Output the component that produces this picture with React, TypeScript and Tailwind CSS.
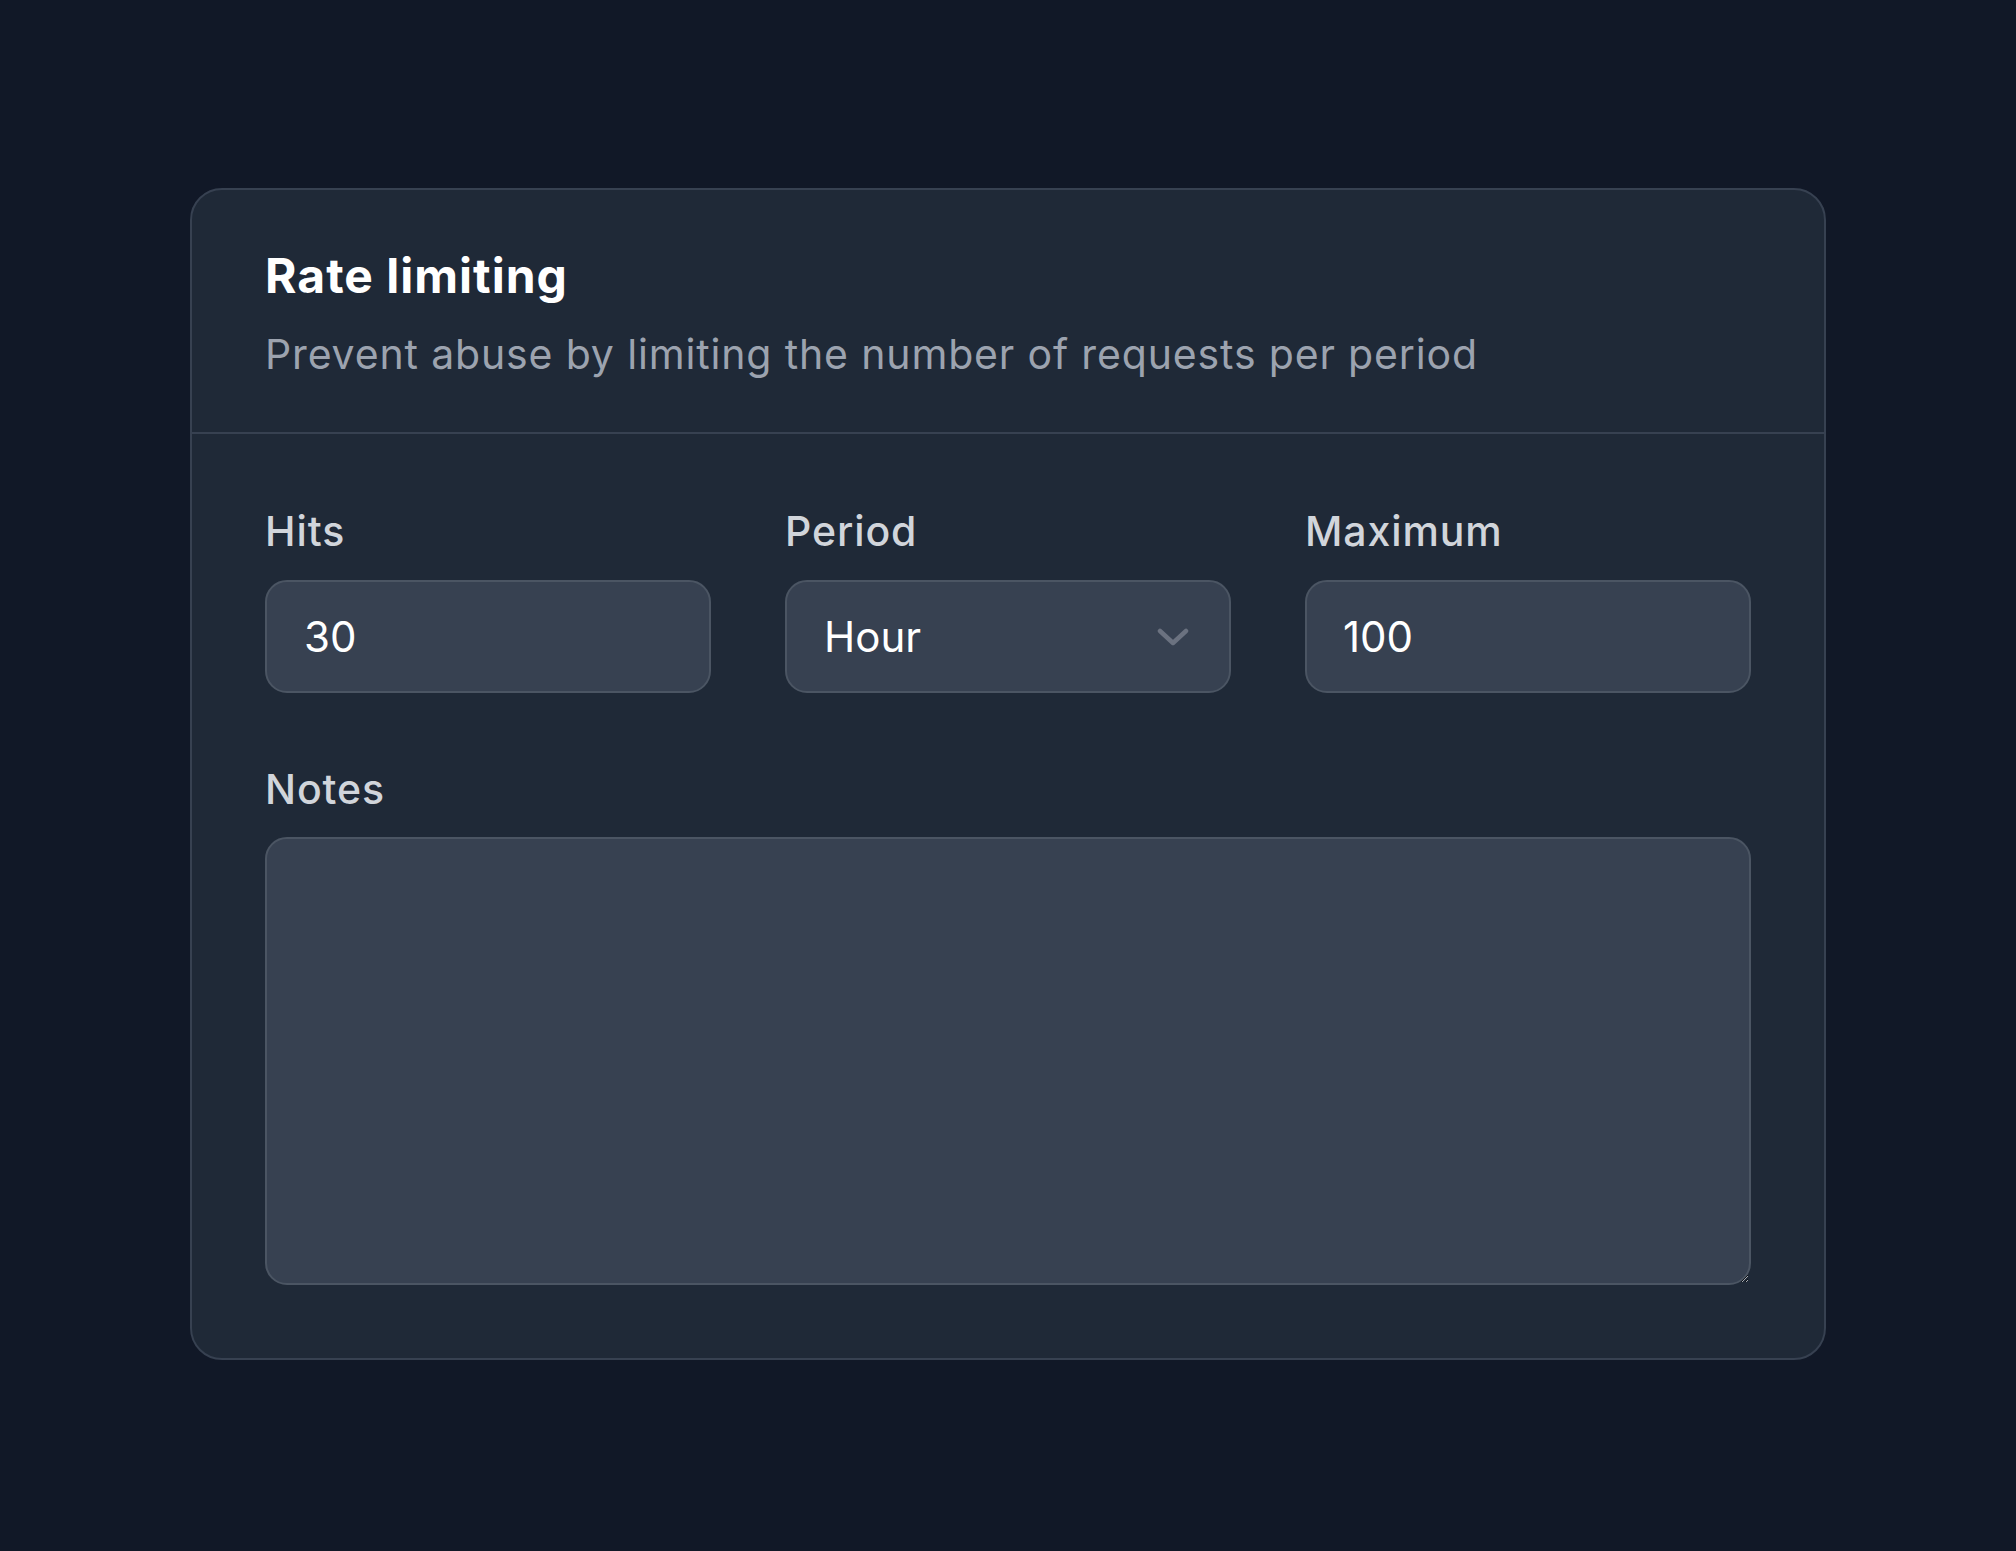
export default function App() {
  return (
    <div className="flex min-h-screen justify-center bg-[#111827] pt-[188px] font-['Inter','Noto_Sans',sans-serif]">
      <div className="h-fit w-[1636px] rounded-[32px] border-2 border-[#374151] bg-[#1f2937]">
        {/* header */}
        <div className="border-b-2 border-[#374151] px-[73px] pt-[57px] pb-[50px]">
          <h2 className="text-[48px] leading-[58px] font-bold tracking-[1px] text-white">Rate limiting</h2>
          <p className="mt-[21px] text-[41px] leading-[56px] tracking-[0.85px] text-[#9ca3af]">
            Prevent abuse by limiting the number of requests per period
          </p>
        </div>

        {/* body */}
        <div className="px-[73px] pt-[73px] pb-[73px]">
          <div className="grid grid-cols-3 gap-x-[74px]">
            <div>
              <label className="block text-[41px] leading-[48px] font-medium tracking-[0.9px] text-[#d1d5db]">Hits</label>
              <div className="mt-[25px] flex h-[113px] items-center rounded-[22px] border-2 border-[#4b5563] bg-[#374151] px-[37px] text-[42px] text-white">
                30
              </div>
            </div>
            <div>
              <label className="block text-[41px] leading-[48px] font-medium tracking-[0.9px] text-[#d1d5db]">Period</label>
              <div className="mt-[25px] flex h-[113px] items-center justify-between rounded-[22px] border-2 border-[#4b5563] bg-[#374151] pl-[37px] pr-[40px] text-[42px] text-white">
                <span>Hour</span>
                <svg width="32" height="18" viewBox="0 0 32 18" fill="none">
                  <path d="M3 3 L16 15 L29 3" stroke="#6b7280" strokeWidth="4.5" strokeLinecap="round" strokeLinejoin="round" />
                </svg>
              </div>
            </div>
            <div>
              <label className="block text-[41px] leading-[48px] font-medium tracking-[0.9px] text-[#d1d5db]">Maximum</label>
              <div className="mt-[25px] flex h-[113px] items-center rounded-[22px] border-2 border-[#4b5563] bg-[#374151] px-[36px] text-[42px] text-white">
                100
              </div>
            </div>
          </div>

          <div className="mt-[72px]">
            <label className="block text-[41px] leading-[48px] font-medium tracking-[0.9px] text-[#d1d5db]">Notes</label>
            <textarea
              className="mt-[24px] block h-[448px] w-full rounded-[22px] border-2 border-[#4b5563] bg-[#374151] px-[37px] py-[30px] text-[42px] text-white outline-none [color-scheme:dark]"
              defaultValue=""
            />
          </div>
        </div>
      </div>
    </div>
  );
}
